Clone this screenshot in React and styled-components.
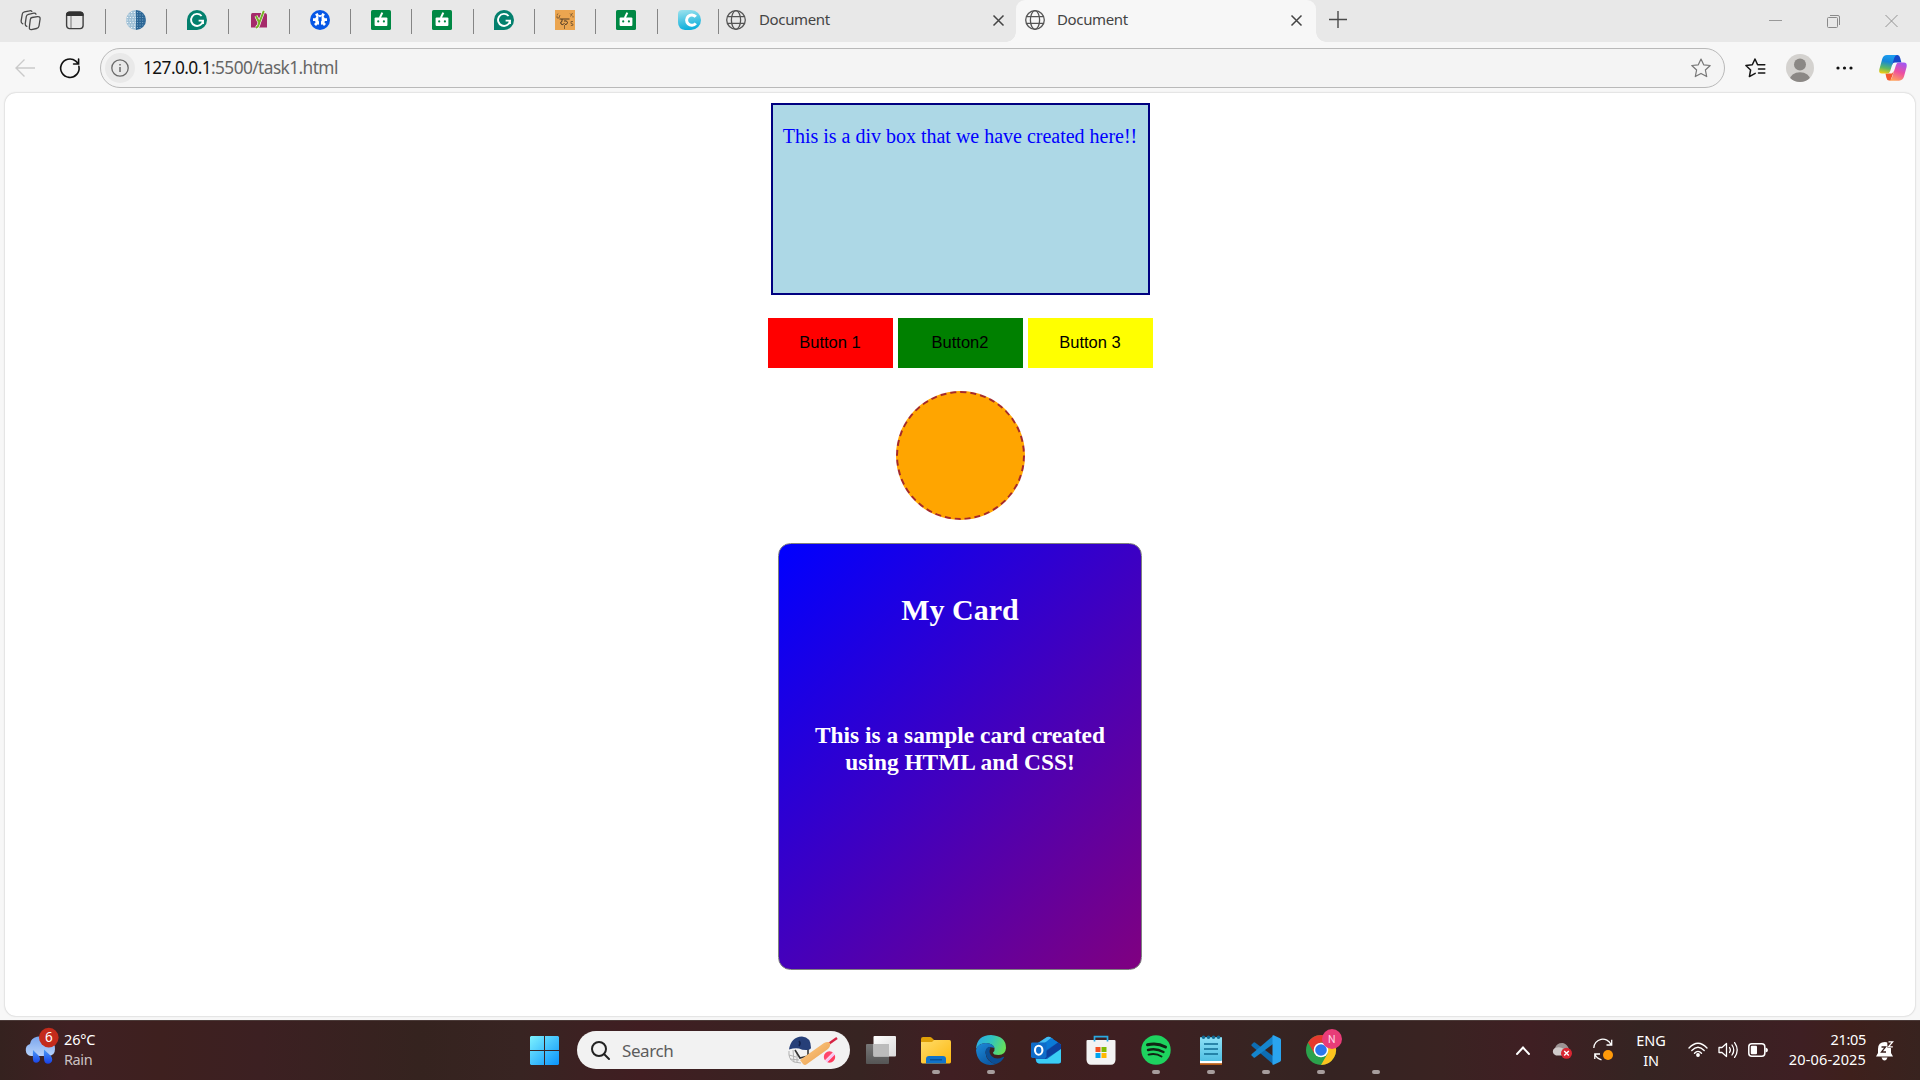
import React from 'react';
import styled, { createGlobalStyle } from 'styled-components';

const UI = '"Noto Sans", "Open Sans", sans-serif';

const GlobalStyle = createGlobalStyle`
  * { box-sizing: border-box; }
  html, body { margin: 0; padding: 0; background: #f7f7f7; overflow: hidden; }
`;

const Screen = styled.div`
  width: 1920px;
  height: 1080px;
  display: flex;
  flex-direction: column;
  background: #f7f7f7;
  font-family: ${UI};
  overflow: hidden;
`;

const Svg = styled.svg`
  display: block;
  flex: none;
  overflow: visible;
`;

/* ---------- tab strip ---------- */

const TabStrip = styled.div`
  height: 42px;
  flex: none;
  display: flex;
  background: #e8e8e8;
`;

const StripActions = styled.div`
  width: 105px;
  padding: 9px 0 0 19px;
  display: flex;
  gap: 24px;
`;

const PinnedTab = styled.div`
  width: 61.3px;
  display: flex;
  padding-top: 10px;
  flex: none;
`;

const Divider = styled.span`
  width: 1px;
  height: 25px;
  margin-top: ${(p) => (p.$flush ? '9px' : '-1px')};
  background: #858585;
  flex: none;
`;

const PinnedIcon = styled.div`
  margin-left: 20px;
`;

const PageTab = styled.div`
  position: relative;
  display: flex;
  align-items: flex-start;
  width: ${(p) => (p.$active ? 300 : 298)}px;
  padding: ${(p) => (p.$active ? '0 13px 0 9px' : '0 11px 0 0')};
  background: ${(p) => (p.$active ? '#f7f7f7' : 'transparent')};
  border-radius: 9px 9px 0 0;
  flex: none;
  z-index: ${(p) => (p.$active ? 1 : 0)};

  &::before,
  &::after {
    content: '';
    display: ${(p) => (p.$active ? 'block' : 'none')};
    position: absolute;
    bottom: 0;
    width: 10px;
    height: 10px;
  }
  &::before {
    left: -10px;
    background: radial-gradient(circle at 0 0, transparent 9.5px, #f7f7f7 10px);
  }
  &::after {
    right: -10px;
    background: radial-gradient(circle at 100% 0, transparent 9.5px, #f7f7f7 10px);
  }
`;

const TabGlobe = styled.div`
  margin: 10px 0 0 ${(p) => (p.$inset ? 7 : 0)}px;
`;

const TabTitle = styled.span`
  flex: 1;
  margin: 9px 0 0 ${(p) => (p.$active ? 12 : 13)}px;
  font-size: 15px;
  line-height: 20px;
  letter-spacing: -0.35px;
  color: #444;
`;

const TabClose = styled.div`
  margin: 14px 0 0;
`;

const NewTab = styled.div`
  margin: 10px 0 0 13px;
`;

const WindowButtons = styled.div`
  margin-left: auto;
  padding: 14px 21px 0 0;
  display: flex;
  gap: 44px;
`;

/* ---------- toolbar ---------- */

const Toolbar = styled.div`
  height: 51px;
  flex: none;
  display: flex;
  align-items: center;
  padding: 0 13px 0 15px;
`;

const Reload = styled.div`
  margin-left: 24px;
`;

const AddressBar = styled.div`
  width: 1625px;
  height: 40px;
  margin-left: 20px;
  padding: 0 13px 0 4px;
  display: flex;
  align-items: center;
  border: 1px solid #b9b9b9;
  border-radius: 20px;
  background: #f4f4f4;
  flex: none;
`;

const SiteInfo = styled.div`
  width: 30px;
  height: 30px;
  display: grid;
  place-items: center;
  border-radius: 50%;
  background: #e9e9e9;
`;

const Url = styled.span`
  flex: 1;
  margin-left: 8px;
  font-size: 17.3px;
  line-height: 24px;
  letter-spacing: -0.58px;
  color: #666;

  b { font-weight: 400; color: #111; }
`;

const ToolbarIcons = styled.div`
  margin-left: 20px;
  display: flex;
  align-items: center;
`;

const AvatarSlot = styled.div`
  margin: 0 22px 0 20px;
`;

const CopilotSlot = styled.div`
  margin-left: 26px;
`;

/* ---------- page ---------- */

const Page = styled.main`
  width: 1910px;
  height: 923px;
  margin: 0 5px 4px;
  padding: 10px 0 0 1px;
  flex: none;
  display: flex;
  flex-direction: column;
  align-items: center;
  background: #fff;
  border-radius: 11px;
  box-shadow: 0 0 2px rgba(0, 0, 0, 0.28);
  font-family: "Liberation Serif", serif;
`;

const Box = styled.div`
  width: 379px;
  height: 192px;
  padding: 20px 1px 0 0;
  background: lightblue;
  border: 2px solid navy;
  color: blue;
  font-size: 20px;
  line-height: 23px;
  letter-spacing: -0.01px;
  text-align: center;
`;

const ButtonRow = styled.div`
  display: flex;
  gap: 5px;
  margin-top: 23px;
`;

const ColorButton = styled.button`
  width: 125px;
  height: 50px;
  padding: 0 1px 1px 0;
  border: none;
  background: ${(p) => p.$color};
  color: #000;
  font: 16.5px "Liberation Sans", sans-serif;
`;

const Circle = styled.div`
  width: 129px;
  height: 129px;
  margin-top: 23px;
  background: orange;
  border: 2px dashed brown;
  border-radius: 50%;
`;

const Card = styled.section`
  width: 364px;
  height: 427px;
  margin: 23px 1px 0 0;
  padding: 49px 25px 0;
  border: 1px solid grey;
  border-radius: 12.5px;
  background: linear-gradient(135deg, blue, purple);
  color: #fff;
  text-align: center;
`;

const CardTitle = styled.h2`
  margin: 0;
  font-size: 30px;
  line-height: 34px;
`;

const CardText = styled.h3`
  margin: 95px 0 0;
  font-size: 23.4px;
  line-height: 27px;
`;

/* ---------- taskbar ---------- */

const Taskbar = styled.footer`
  height: 60px;
  flex: none;
  display: flex;
  border-top: 1px solid #4b3a38;
  background: linear-gradient(
    90deg,
    #35221f 0, #3f2023 70px, #3e201f 160px, #3c2022 260px, #35231f 420px, #382422 520px,
    #401e22 640px, #3a2222 760px, #372422 860px, #401f23 950px, #3e201f 1020px,
    #3f1f22 1120px, #372422 1260px, #352322 1330px, #3a2322 1440px, #3f1f23 1530px,
    #352422 1640px, #3e1f23 1800px, #3e201c 1850px, #38231f 1920px
  );
`;

const Weather = styled.div`
  width: 530px;
  padding: 6px 0 0 24px;
  display: flex;
  gap: 8px;
`;

const WeatherText = styled.div`
  padding-top: 2px;
  display: flex;
  flex-direction: column;
  font-size: 14.5px;
  line-height: 20px;
  letter-spacing: -0.15px;
  color: #fff;

  span:last-child { color: #cbc2c2; letter-spacing: -0.4px; }
`;

const Start = styled.div`
  margin-top: 15px;
`;

const SearchBox = styled.div`
  width: 273px;
  height: 38px;
  margin: 10px 0 0 18px;
  padding: 0 12px 0 14px;
  display: flex;
  align-items: center;
  border-radius: 19px;
  background: #f2f2f2;
`;

const SearchLabel = styled.span`
  flex: 1;
  margin-left: 12px;
  padding-top: 2px;
  font-size: 17px;
  line-height: 24px;
  letter-spacing: -0.4px;
  color: #5c5c5c;
`;

const Apps = styled.div`
  display: flex;
  margin-left: 3.5px;
`;

const AppSlot = styled.div`
  width: 55px;
  padding-top: 14px;
  display: flex;
  flex-direction: column;
  align-items: center;
  gap: 5px;
`;

const Running = styled.span`
  width: 8px;
  height: 4px;
  border-radius: 2px;
  background: #a79d9d;
`;

const Tray = styled.div`
  margin-left: auto;
  padding-right: 26px;
  display: flex;
`;

const TrayIcon = styled.div`
  margin: ${(p) => p.$top}px 0 0 ${(p) => p.$gap || 0}px;
`;

const Language = styled.div`
  width: 40px;
  margin-left: 17px;
  padding-top: 9px;
  font-size: 14.5px;
  line-height: 20px;
  letter-spacing: -0.1px;
  text-align: center;
  color: #fff;
`;

const Clock = styled.div`
  width: 90px;
  margin-left: 8px;
  padding-top: 8px;
  display: flex;
  flex-direction: column;
  align-items: flex-end;
  font-size: 14.5px;
  line-height: 20px;
  letter-spacing: -0.3px;
  white-space: nowrap;
  color: #fff;

  span:last-child { letter-spacing: 0.15px; }
`;

/* ---------- icons ---------- */

const Icon = ({ w = 20, h = w, box, children, ...rest }) => (
  <Svg width={w} height={h} viewBox={box || `0 0 ${w} ${h}`} fill="none" {...rest}>{children}</Svg>
);

const WorkspacesIcon = () => (
  <Icon w={22} h={23} stroke="#484848" strokeWidth="1.3" strokeLinejoin="round" strokeLinecap="round">
    <path d="M13 8.5 18.5 7.6Q21.3 7.4 21.1 10L20 17Q19.7 19 17.5 19.5L12.5 20.6Q10 20.8 10.4 18L11.3 10.5Q11.5 8.8 13 8.5Z" />
    <path d="M17 5.2Q16.5 3.9 14.8 4.2L9.5 5.3Q7.6 5.8 7.3 7.5L6.2 14.8Q6.1 17.1 7.8 17.4" />
    <path d="M12.8 2.4Q12 1.4 10.5 1.8L5.5 2.8Q3.6 3.3 3.3 5L2.1 12.1Q2 14.3 3.8 14.8" />
  </Icon>
);

const TabActionsIcon = () => (
  <Icon w={19} h={22}>
    <rect x="1.6" y="3.1" width="16.5" height="16.5" rx="3" stroke="#404040" strokeWidth="1.4" />
    <path d="M1.6 6.5V5.5Q1.6 3 4.2 3H15.5Q18.1 3 18.1 5.5V6.5Z" fill="#333" stroke="#333" />
    <path d="M6 7V19" stroke="#777" strokeWidth="1" />
  </Icon>
);

const DottedGlobe = () => (
  <Icon>
    <path d="M10 0A10 10 0 0 0 10 20Z" fill="#9fc0d6" />
    <path d="M10 0A10 10 0 0 1 10 20Z" fill="#2b6696" />
    <g stroke="#eef5f9" strokeWidth="1" strokeDasharray="1.2 1.6">
      <path d="M5 2.5H10M2.5 5H10M1 7.5H10M.5 10H10M1 12.5H10M2.5 15H10M5 17.5H10" />
    </g>
    <g stroke="#85adc8" strokeWidth="1" strokeDasharray="1 1.6">
      <path d="M11 2.5H15M11 5H18M11 7.5H19M11 10H19.5M11 12.5H19M11 15H18M11 17.5H15" />
    </g>
  </Icon>
);

const Grammarly = () => (
  <Icon>
    <path d="M10 0A10 10 0 1 1 10 20H0V10A10 10 0 0 1 10 0Z" fill="#04806e" />
    <path d="M14.6 6A6 6 0 1 0 16 10.6H11.6M16 10.6V14" stroke="#fff" strokeWidth="1.9" />
  </Icon>
);

const Yoast = () => (
  <Icon>
    <path d="M3.5 3H13L9 17.5H2V5Q2 3 3.5 3Z" fill="#a52a6a" />
    <path d="M14 3H15.5Q18 3 18 5.5V17.5H8.5Z" fill="#a52a6a" />
    <path d="M7 6 10.2 12.5M14.8 .8 10.2 13Q9.2 17 7 17.8" stroke="#fff" strokeWidth="3.2" />
    <path d="M7 6 10.2 12.5M14.8 .8 10.2 13Q9.2 17 7 17.8" stroke="#77b227" strokeWidth="2" />
  </Icon>
);

const GearBadge = () => (
  <Icon>
    <circle cx="10" cy="10" r="10" fill="#0757e6" />
    <circle cx="10" cy="10" r="5" fill="#fff" />
    <path d="M6.4 3.6 7.6 6M13.6 3.6 12.4 6M3 9.6H6M17 9.6H14M5 15 7 13M15 15 13 13" stroke="#fff" strokeWidth="2.8" />
    <path d="M8.4 6V9.2A2 2 0 0 0 9 11.4V16H11V11.4A2 2 0 0 0 11.6 9.2V6L10 7.6Z" fill="#0757e6" />
  </Icon>
);

const Robot = () => (
  <Icon>
    <rect width="20" height="20" rx="1.6" fill="#008844" />
    <rect x="3.6" y="7.6" width="12.8" height="8.4" rx="1" fill="#fff" />
    <path d="M8.8 8 11.3 2.6" stroke="#fff" strokeWidth="2" />
    <circle cx="7.2" cy="11.4" r="1.1" fill="#084" />
    <circle cx="12.9" cy="11.4" r="1.1" fill="#084" />
  </Icon>
);

const Doodle = () => (
  <Icon>
    <rect width="20" height="20" fill="#eba550" />
    <path d="M4.5 9H14.5M7 9V11.5Q5 11.5 6 14Q8 16 9.5 13M9 11Q12 10 12.5 12.5Q12 15 10 14.5" stroke="#4d3824" strokeWidth="1" />
    <path d="M2 5.5V8H4L5 5M3 3.5 2 5M15 3.5 17 5.5M17.5 3 15.5 6.5M18 6V7.5M9.5 15V19M18 11.5H16V13.5Q18.5 13.5 18 15.2L15.8 15.6" stroke="#7d5a32" strokeWidth="0.9" />
  </Icon>
);

const CyanC = () => (
  <Icon>
    <defs>
      <linearGradient id="cyan" x1="0" y1="0" x2="0.2" y2="1">
        <stop offset="0" stopColor="#9fe3ee" /><stop offset="1" stopColor="#10b0dc" />
      </linearGradient>
    </defs>
    <path d="M4 0H13A10 10 0 0 1 13 20H7Q0 19 0 12V4Q0 0 4 0Z" fill="url(#cyan)" />
    <path d="M17.8 6.8A5.2 5.2 0 1 0 17.8 13.4" stroke="#fff" strokeWidth="3" />
  </Icon>
);

const Globe = () => (
  <Icon stroke="#555" strokeWidth="1.3">
    <circle cx="10" cy="10" r="9.3" />
    <ellipse cx="10" cy="10" rx="4.6" ry="9.3" />
    <path d="M1.5 6.6H18.5M1.5 13.4H18.5" />
  </Icon>
);

const Cross = ({ size = 13, color = '#444', weight = 1.5 }) => (
  <Icon w={size} stroke={color} strokeWidth={weight}>
    <path d={`M1.5 1.5 ${size - 1.5} ${size - 1.5}M${size - 1.5} 1.5 1.5 ${size - 1.5}`} />
  </Icon>
);

const Star = () => (
  <Icon w={20} box="0 0 20 20" stroke="#777" strokeWidth="1.2" strokeLinejoin="round">
    <path d="M10 1 12.7 6.8 19.2 7.5 14.4 12 15.7 18.6 10 15.4 4.3 18.6 5.6 12 .8 7.5 7.3 6.8Z" />
  </Icon>
);

const Favorites = () => (
  <Icon w={21} h={20} stroke="#161616" strokeWidth="1.5" strokeLinejoin="round" strokeLinecap="round">
    <path d="M14 6.8H12.6L10 1 7.3 6.8 .9 7.5 5.6 12 4.4 18.6 10.2 15.4M13 6.8H19.8M13.5 11H19.8M13.5 15H19.8" />
  </Icon>
);

const Avatar = () => (
  <Icon w={28}>
    <defs><clipPath id="face"><circle cx="14" cy="14" r="14" /></clipPath></defs>
    <circle cx="14" cy="14" r="14" fill="#d4d2cf" />
    <g clipPath="url(#face)" fill="#8b8885">
      <circle cx="14" cy="10.5" r="6" /><ellipse cx="14" cy="26" rx="10.3" ry="7.8" />
    </g>
  </Icon>
);

const Copilot = () => (
  <Icon w={28} h={26}>
    <defs>
      <linearGradient id="cpA" x1="0.5" y1="0" x2="0.3" y2="1">
        <stop offset="0" stopColor="#1b9df0" /><stop offset=".35" stopColor="#1687d8" /><stop offset=".7" stopColor="#5bb865" /><stop offset="1" stopColor="#f2cb12" />
      </linearGradient>
      <linearGradient id="cpB" x1="0.7" y1="0" x2="0.3" y2="1">
        <stop offset="0" stopColor="#a456f0" /><stop offset=".5" stopColor="#ee4fa0" /><stop offset="1" stopColor="#ffa45c" />
      </linearGradient>
    </defs>
    <path d="M14 0H18.5Q20.5 0 21.2 3L22.4 7.6H16Q14 7.6 13 10Z" fill="#1748c9" />
    <path d="M6.5 18.4H13L15 16 11.5 25.6H10Q8 25.6 7.3 22.5Z" fill="#f4572f" />
    <path d="M8 0H18Q16 .4 15.2 3L11.2 16Q10.4 18.6 8 18.6H3Q-.6 18.6 .3 14.5L3.2 4Q4.4 0 8 0Z" fill="url(#cpA)" />
    <path d="M20 7.6H24.6Q28.5 7.6 27.6 12L25 21.6Q23.8 25.7 20 25.7H10Q12 25.2 13 22.5L17 10Q17.8 7.6 20 7.6Z" fill="url(#cpB)" />
  </Icon>
);

const RainIcon = () => (
  <Icon w={32} h={36}>
    <defs>
      <linearGradient id="cloud" x1="0" y1="0" x2="0" y2="1"><stop stopColor="#7ba6ee" /><stop offset="1" stopColor="#b7d2fa" /></linearGradient>
      <linearGradient id="drop" x1="0" y1="0" x2="0" y2="1"><stop stopColor="#4a9cf8" /><stop offset="1" stopColor="#1740e8" /></linearGradient>
    </defs>
    <path d="M7 29A6.2 6.2 0 0 1 6 17A8.6 8.6 0 0 1 22 14Q31 14 31 22Q31 29 24 29Z" fill="url(#cloud)" />
    <path d="M9 23 15 29Q17 32 15 34.5Q12 37 9.5 34.5Q8.5 33 9 23ZM20 22.5 27 29Q29.5 33 27 35.5Q24 38 21 35.5Q19.5 34 20 22.5Z" fill="url(#drop)" />
    <circle cx="24.8" cy="10.6" r="9.8" fill="#c42b1c" />
    <text x="24.8" y="15.4" fill="#fff" fontSize="13.5" textAnchor="middle" fontFamily={UI}>6</text>
  </Icon>
);

const WindowsLogo = () => (
  <Icon w={29}>
    <defs><linearGradient id="win" gradientUnits="userSpaceOnUse" x1="0" y1="0" x2="29" y2="29"><stop stopColor="#7df2fe" /><stop offset="1" stopColor="#0a93fb" /></linearGradient></defs>
    <path d="M1 0H14V14H0V1ZM15 0H28L29 1V14H15ZM0 15H14V29H1L0 28ZM15 15H29V28L28 29H15Z" fill="url(#win)" />
  </Icon>
);

const SearchIcon = () => (
  <Icon w={19} stroke="#222" strokeWidth="2" strokeLinecap="round"><circle cx="8" cy="8" r="7" /><path d="M13 13 18 18" /></Icon>
);

const Cricket = () => (
  <Icon w={50} h={30}>
    <defs>
      <linearGradient id="bat" x1="0" y1="0" x2="1" y2="1"><stop stopColor="#ffcf8a" /><stop offset="1" stopColor="#e89a48" /></linearGradient>
      <linearGradient id="ball" x1="0" y1="0" x2="1" y2="1"><stop stopColor="#ff3c5c" /><stop offset=".42" stopColor="#ff4a70" /><stop offset=".46" stopColor="#ffd5ea" /><stop offset=".62" stopColor="#f5b8f0" /><stop offset=".66" stopColor="#ff3c5c" /><stop offset="1" stopColor="#ff3c5c" /></linearGradient>
    </defs>
    <path d="M1 16Q0 24 6 27L13 28M1 20 8 22M2 24 11 25M5 15 6 27M9 17 9 27" stroke="#b2b2b2" strokeWidth="1" />
    <path d="M7 15 12 23 20 21 20 14" stroke="#333" strokeWidth="1.6" />
    <path d="M1 14.5Q3 2 14 1.5Q23 2 23 13Q22 15 18 15Q14 15 11 13.5Q7 12.5 1 14.5Z" fill="#263f78" />
    <path d="M11 6Q13 8 11 11" stroke="#10214b" strokeWidth="1.6" />
    <path d="M39 10 49 3" stroke="#d52343" strokeWidth="2.4" />
    <path d="M12 25 36 8Q40 6 42 8Q43 11 40 14L19 29Q17 31 15 29Z" fill="url(#bat)" />
    <circle cx="41.5" cy="22" r="5.7" fill="url(#ball)" />
  </Icon>
);

const TaskView = () => (
  <Icon w={30}>
    <defs>
      <linearGradient id="tvA" x1="0" y1="0" x2="1" y2="1"><stop stopColor="#fff" /><stop offset="1" stopColor="#dadada" /></linearGradient>
      <linearGradient id="tvB" x1="0" y1="0" x2="0" y2="1"><stop stopColor="#777" /><stop offset="1" stopColor="#555" /></linearGradient>
    </defs>
    <rect x="0" y="9" width="23" height="20" rx="1" fill="url(#tvB)" />
    <rect x="7.5" y="1" width="22.5" height="20.5" rx="1" fill="url(#tvA)" />
    <rect x="7.5" y="9" width="15.5" height="12.5" fill="#bcbcbc" />
  </Icon>
);

const Explorer = () => (
  <Icon w={30}>
    <defs><linearGradient id="fol" x1="0" y1="0" x2="1" y2="1"><stop stopColor="#ffdc6a" /><stop offset="1" stopColor="#fdb80e" /></linearGradient></defs>
    <path d="M0 4Q0 2 2 2H9Q10 2 11 3L13 5H28V12H0Z" fill="#dfa008" />
    <path d="M0 7H11L13 5H28.5Q30 5 30 7V27Q30 28.4 28.5 28.4H1.5Q0 28.4 0 27Z" fill="url(#fol)" />
    <path d="M5 28.4V24Q5 21 8 21H22Q25 21 25 24V28.4Z" fill="#1173c9" />
    <path d="M9 24.8H21" stroke="#064a8e" strokeWidth="1.2" />
  </Icon>
);

const Edge = () => (
  <Icon w={30}>
    <defs>
      <linearGradient id="edA" x1="0" y1="0.2" x2="1" y2="0.5"><stop stopColor="#29a9e8" /><stop offset=".5" stopColor="#31c4bd" /><stop offset="1" stopColor="#66e05a" /></linearGradient>
      <linearGradient id="edB" x1="0" y1="0" x2="0.6" y2="1"><stop stopColor="#1d8bd9" /><stop offset="1" stopColor="#0c59a4" /></linearGradient>
    </defs>
    <path d="M0 14Q1 0 15 0Q30 1 30 13Q29.5 20 22.5 20Q17 20 17 17.5Q19 16 18.5 13Q17 8.5 10 8Q3 8 0 14Z" fill="url(#edA)" />
    <path d="M0 15Q2 8 10 8Q17.5 8.4 18.5 13Q10 10.5 9.5 17.5Q10 27 20 29Q17 30.3 13.5 30Q1 28.5 0 15Z" fill="url(#edB)" />
    <path d="M13 11.7Q9 13.5 9.5 18Q11 27 20 29Q25 27.5 28 22.5Q28 21.5 27 22Q20 25.5 15.5 21Q12 17 14.5 13Z" fill="#0b4f96" />
  </Icon>
);

const Outlook = () => (
  <Icon w={30}>
    <path d="M4 10 16 2Q17.5 1.4 19 2L30 9.5V26Q30 28.5 27.5 28.5H8Q5 28 4.5 24Z" fill="#1263bd" />
    <path d="M7 8 16 2Q17.5 1.4 19 2L22 4 7 13Z" fill="#42bdf2" />
    <path d="M20 3 27 7.5 12 17 7 13Z" fill="#0a7ad7" />
    <path d="M27 7.5 30 10 30 14 14 24V17Z" fill="#0c3f9d" />
    <path d="M30 14V26Q30 28.5 27.5 28.5H8Q5 28 5 24H16Z" fill="#3bcdf5" />
    <rect x="0" y="7.5" width="15.5" height="15.5" rx="1.4" fill="#0f6cc9" />
    <ellipse cx="7.7" cy="15.2" rx="3.7" ry="4.5" stroke="#fff" strokeWidth="2.1" />
  </Icon>
);

const Store = () => (
  <Icon w={30}>
    <path d="M1.6 5H28.4Q29.5 5 29.5 6V25Q29 29.8 25 29.8H5Q1 29.8.5 25V6Q.5 5 1.6 5Z" fill="#f3f3f3" />
    <path d="M8.5 6.5V1.7H21.5V6.5" stroke="#2aa9e1" strokeWidth="1.7" />
    <path d="M9.5 12H14.5V17H9.5Z" fill="#f25022" /><path d="M15.5 12H20.5V17H15.5Z" fill="#7fba00" />
    <path d="M9.5 18H14.5V23H9.5Z" fill="#00a4ef" /><path d="M15.5 18H20.5V23H15.5Z" fill="#ffb900" />
  </Icon>
);

const Spotify = () => (
  <Icon w={30}>
    <circle cx="15" cy="15" r="14.7" fill="#1ed35f" />
    <g stroke="#102514" strokeLinecap="round">
      <path d="M6.5 9.8Q16 7.3 24.5 12" strokeWidth="3" /><path d="M7 15Q15 12.8 22.5 17" strokeWidth="2.4" /><path d="M7.6 19.6Q15 17.8 20.5 21.5" strokeWidth="2" />
    </g>
  </Icon>
);

const Notepad = () => (
  <Icon w={30}>
    <defs><linearGradient id="note" x1="0" y1="0" x2="0" y2="1"><stop stopColor="#8ee0f5" /><stop offset="1" stopColor="#50c0e4" /></linearGradient></defs>
    <rect x="4" y="26" width="22" height="4" fill="#b55a14" />
    <rect x="4" y="24" width="22" height="4.2" fill="#fff" />
    <rect x="4" y="2" width="22" height="24" rx="1" fill="url(#note)" />
    <g fill="#136b93"><circle cx="7.5" cy="2.2" r="1.8" /><circle cx="12.5" cy="2.2" r="1.8" /><circle cx="17.5" cy="2.2" r="1.8" /><circle cx="22.5" cy="2.2" r="1.8" /></g>
    <path d="M8 9H22M8 14H22M8 19H22" stroke="#106c92" strokeWidth="1.7" />
  </Icon>
);

const VSCode = () => (
  <Icon w={30}>
    <path d="M.6 9.4 2.6 7.5Q3.3 7 4 7.5L22 21V29L.8 11Q0 10.2.6 9.4Z" fill="#0d6db3" />
    <path d="M.6 20.6 2.6 22.5Q3.3 23 4 22.5L22 9V1L.8 19Q0 19.8.6 20.6Z" fill="#1585cd" />
    <path d="M21.5.4Q22 0 22.7.3L29 3.2Q30 3.8 30 5V25Q30 26.2 29 26.8L22.7 29.7Q22 30 21.5 29.6Z" fill="#2aa4ef" />
  </Icon>
);

const Chrome = () => (
  <Icon w={30}>
    <circle cx="15" cy="15" r="15" fill="#2ba24c" />
    <path d="M2 7.5A15 15 0 0 1 28 7.5H15Q9 8 8.5 18.7Z" fill="#e53a2e" />
    <path d="M28 7.5A15 15 0 0 1 15 30L21.5 18.7Q23 12 17 7.5Z" fill="#fcc31e" />
    <circle cx="15" cy="15" r="7.3" fill="#fff" /><circle cx="15" cy="15" r="5.8" fill="#2b77ed" />
    <circle cx="26" cy="4" r="10" fill="#e83c78" />
    <text x="25.8" y="8" textAnchor="middle" fontSize="10.5" fill="#ffd5e4" fontFamily="Roboto, sans-serif">N</text>
  </Icon>
);

const Blank = () => <Icon w={30} />;

const CloudError = () => (
  <Icon w={21} h={18}>
    <path d="M4 13A4 4 0 0 1 3 6Q5 .5 11 1Q15 2 17 7L12 13Z" fill="#9c9393" />
    <path d="M4 13.5A4 4 0 0 1 3 6Q8 4 12 7V13.5Z" fill="#d0caca" />
    <circle cx="14.5" cy="11.3" r="5.5" fill="#d92632" />
    <path d="M12.2 9 16.8 13.6M16.8 9 12.2 13.6" stroke="#fff" strokeWidth="1.4" />
  </Icon>
);

const Sync = () => (
  <Icon w={21} h={22} stroke="#fff" strokeWidth="1.3">
    <path d="M.8 9A9 9 0 0 1 18 5.5M18.7 .8V6H13.5" /><path d="M1.8 20V15H7M1.8 15Q3.5 19.5 8.5 20.8" />
    <circle cx="15" cy="16" r="5" fill="#ff9a0a" stroke="none" />
  </Icon>
);

const Wifi = () => (
  <Icon w={20} h={16} stroke="#fff" strokeWidth="1.4" strokeLinecap="round">
    <path d="M1 6Q10-3.5 19 6M3.8 8.6Q10 2 16.2 8.6M6.5 11.2Q10 7.5 13.5 11.2" />
    <circle cx="10" cy="13" r="1.2" fill="#fff" />
  </Icon>
);

const Volume = () => (
  <Icon w={20} h={18} stroke="#fff" strokeWidth="1.3" strokeLinecap="round" strokeLinejoin="round">
    <path d="M1 6.5H4L8.5 2.5V15.5L4 11.5H1ZM11.5 6.5Q13.2 9 11.5 11.5M14 4Q17.5 9 14 14M16.6 1.6Q21.8 9 16.6 16.4" />
  </Icon>
);

const Battery = () => (
  <Icon w={20} h={14}>
    <rect x=".8" y=".8" width="16" height="12.4" rx="3" stroke="#fff" strokeWidth="1.5" />
    <rect x="2.8" y="2.8" width="6.2" height="8.4" rx="1" fill="#fff" /><path d="M17.5 4.5Q20 5 20 7Q20 9 17.5 9.5Z" fill="#fff" />
  </Icon>
);

const Bell = () => (
  <Icon w={18} h={20}>
    <path d="M2 12V8Q2 1 9 1Q15 1 15 8V12L17 15.5H0Z" fill="#fff" /><path d="M5.5 16.5H11.5Q10.5 19.5 8.5 19.5Q6.5 19.5 5.5 16.5Z" fill="#fff" />
    <path d="M5.5 6H9.5L5.5 11H10" stroke="#38211f" strokeWidth="1.3" />
    <path d="M11.2 0H18V7H11.5Z" fill="#3e201c" />
    <path d="M12.5 .8H16.6L12.5 5.8H16.8" stroke="#fff" strokeWidth="1.3" />
  </Icon>
);

/* ---------- data ---------- */

const pinned = [DottedGlobe, Grammarly, Yoast, GearBadge, Robot, Robot, Grammarly, Doodle, Robot, CyanC];

const buttons = [
  { label: 'Button 1', color: 'red' },
  { label: 'Button2', color: 'green' },
  { label: 'Button 3', color: 'yellow' },
];

const apps = [
  { Art: TaskView }, { Art: Explorer, running: true }, { Art: Edge, running: true },
  { Art: Outlook }, { Art: Store }, { Art: Spotify, running: true },
  { Art: Notepad, running: true }, { Art: VSCode, running: true },
  { Art: Chrome, running: true }, { Art: Blank, running: true },
];

export default function App() {
  return (
    <Screen>
      <GlobalStyle />
      <TabStrip>
        <StripActions><WorkspacesIcon /><TabActionsIcon /></StripActions>
        {pinned.map((Art, i) => (
          <PinnedTab key={i}><Divider /><PinnedIcon><Art /></PinnedIcon></PinnedTab>
        ))}
        <PageTab>
          <Divider $flush />
          <TabGlobe $inset><Globe /></TabGlobe>
          <TabTitle>Document</TabTitle>
          <TabClose><Cross /></TabClose>
        </PageTab>
        <PageTab $active>
          <TabGlobe><Globe /></TabGlobe>
          <TabTitle $active>Document</TabTitle>
          <TabClose><Cross /></TabClose>
        </PageTab>
        <NewTab><Icon w={18} stroke="#4a4a4a" strokeWidth="1.4"><path d="M0 9.5H18M9 1V18" /></Icon></NewTab>
        <WindowButtons>
          <Icon w={14}><path d="M0 6.5H13" stroke="#999" /></Icon>
          <Icon w={14} stroke="#8a8a8a"><rect x=".5" y="3.5" width="10" height="10" rx="1" /><path d="M3 1.5H11Q12.5 1.5 12.5 3V11" /></Icon>
          <Icon w={14} stroke="#949494"><path d="M.5 1 12.5 13M12.5 1 .5 13" /></Icon>
        </WindowButtons>
      </TabStrip>

      <Toolbar>
        <Icon w={21} h={20} stroke="#cacaca" strokeWidth="1.4"><path d="M20 10H1M9.5 1.5 1 10 9.5 18.5" /></Icon>
        <Reload>
          <Icon w={20} stroke="#111" strokeWidth="1.6" strokeLinecap="round">
            <path d="M18.9 8.4A9.2 9.2 0 1 1 15.8 3.2L18.4 5.8M18.6 1V6H13.6" />
          </Icon>
        </Reload>
        <AddressBar>
          <SiteInfo>
            <Icon w={18} stroke="#6a6a6a" strokeWidth="1.3">
              <circle cx="9" cy="9" r="8.2" /><path d="M9 8V13M9 5V6.6" strokeWidth="1.5" />
            </Icon>
          </SiteInfo>
          <Url><b>127.0.0.1</b>:5500/task1.html</Url>
          <Star />
        </AddressBar>
        <ToolbarIcons>
          <Favorites />
          <AvatarSlot><Avatar /></AvatarSlot>
          <Icon w={17} h={4}><circle cx="2" cy="2" r="1.6" fill="#111" /><circle cx="8.5" cy="2" r="1.6" fill="#111" /><circle cx="15" cy="2" r="1.6" fill="#111" /></Icon>
          <CopilotSlot><Copilot /></CopilotSlot>
        </ToolbarIcons>
      </Toolbar>

      <Page>
        <Box>This is a div box that we have created here!!</Box>
        <ButtonRow>
          {buttons.map((b) => <ColorButton key={b.label} $color={b.color}>{b.label}</ColorButton>)}
        </ButtonRow>
        <Circle />
        <Card>
          <CardTitle>My Card</CardTitle>
          <CardText>This is a sample card created using HTML and CSS!</CardText>
        </Card>
      </Page>

      <Taskbar>
        <Weather>
          <RainIcon />
          <WeatherText><span>26°C</span><span>Rain</span></WeatherText>
        </Weather>
        <Start><WindowsLogo /></Start>
        <SearchBox><SearchIcon /><SearchLabel>Search</SearchLabel><Cricket /></SearchBox>
        <Apps>
          {apps.map(({ Art, running }, i) => (
            <AppSlot key={i}><Art />{running && <Running />}</AppSlot>
          ))}
        </Apps>
        <Tray>
          <TrayIcon $top={25}><Icon w={14} h={9} stroke="#fff" strokeWidth="1.9" strokeLinecap="round"><path d="M1 8 7 1.5 13 8" /></Icon></TrayIcon>
          <TrayIcon $top={21} $gap={22}><CloudError /></TrayIcon>
          <TrayIcon $top={18} $gap={20}><Sync /></TrayIcon>
          <Language>ENG<br />IN</Language>
          <TrayIcon $top={21} $gap={17}><Wifi /></TrayIcon>
          <TrayIcon $top={20} $gap={10}><Volume /></TrayIcon>
          <TrayIcon $top={22} $gap={10}><Battery /></TrayIcon>
          <Clock><span>21:05</span><span>20-06-2025</span></Clock>
          <TrayIcon $top={20} $gap={10}><Bell /></TrayIcon>
        </Tray>
      </Taskbar>
    </Screen>
  );
}
